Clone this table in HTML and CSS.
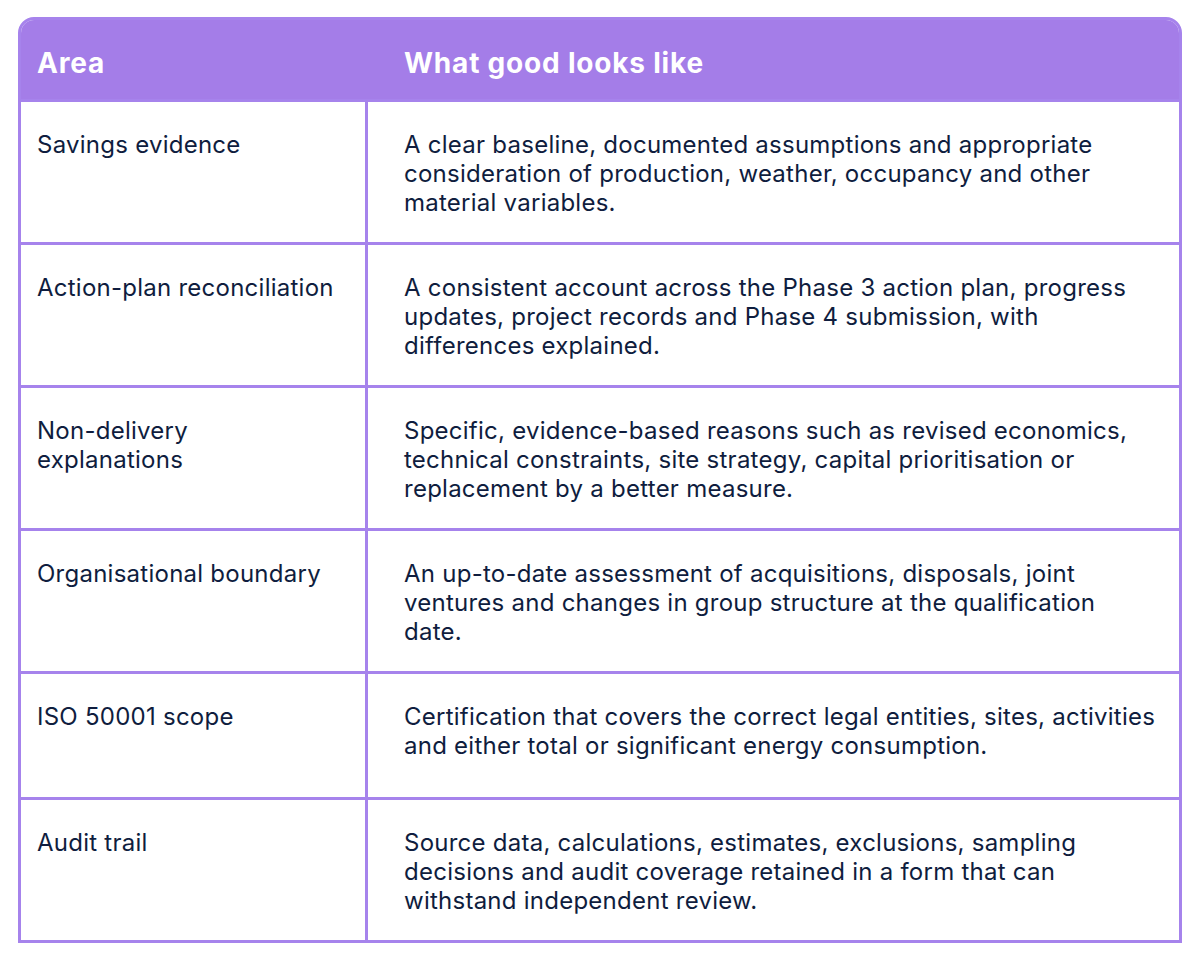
FILE: index.html
```html
<!DOCTYPE html>
<html lang="en">
<head>
<meta charset="utf-8">
<title>What good looks like</title>
<link rel="stylesheet" href="styles.css">
</head>
<body>
<div class="table">
  <div class="row head">
    <div class="cell area">Area</div>
    <div class="cell desc">What good looks like</div>
  </div>
  <div class="row">
    <div class="cell area">Savings evidence</div>
    <div class="cell desc">A clear baseline, documented assumptions and appropriate consideration of production, weather, occupancy and other material variables.</div>
  </div>
  <div class="row">
    <div class="cell area">Action-plan reconciliation</div>
    <div class="cell desc">A consistent account across the Phase 3 action plan, progress updates, project records and Phase 4 submission, with differences explained.</div>
  </div>
  <div class="row">
    <div class="cell area">Non-delivery explanations</div>
    <div class="cell desc">Specific, evidence-based reasons such as revised economics, technical constraints, site strategy, capital prioritisation or replacement by a better measure.</div>
  </div>
  <div class="row">
    <div class="cell area">Organisational boundary</div>
    <div class="cell desc">An up-to-date assessment of acquisitions, disposals, joint ventures and changes in group structure at the qualification date.</div>
  </div>
  <div class="row">
    <div class="cell area">ISO 50001 scope</div>
    <div class="cell desc">Certification that covers the correct legal entities, sites, activities and either total or significant energy consumption.</div>
  </div>
  <div class="row">
    <div class="cell area">Audit trail</div>
    <div class="cell desc">Source data, calculations, estimates, exclusions, sampling decisions and audit coverage retained in a form that can withstand independent review.</div>
  </div>
</div>
</body>
</html>
```
FILE: styles.css
```css
html, body {
  margin: 0;
  padding: 0;
  background: #ffffff;
}
body {
  padding: 17px 18px 0 18px;
  font-family: Inter, "Noto Sans", sans-serif;
  color: #0f1d3e;
}
.table {
  border: 3px solid #a683ec;
  border-radius: 16px 16px 0 0;
  overflow: hidden;
}
.row {
  display: grid;
  grid-template-columns: 347px 1fr;
  border-top: 3px solid #a683ec;
}
.row.head {
  border-top: none;
  background: #a47de8;
  height: 79px;
  align-items: center;
}
.cell {
  box-sizing: border-box;
  font-size: 24px;
  line-height: 29px;
  letter-spacing: 0.25px;
  padding: 28px 20px 25px 16px;
  min-height: 123px;
}
.row .cell.area {
  border-right: 3px solid #a683ec;
  padding-right: 27px;
}
.row.head .cell {
  color: #ffffff;
  font-weight: 700;
  font-size: 28px;
  letter-spacing: 0.8px;
  padding-top: 8px;
  padding-bottom: 0;
  min-height: 0;
  border-right: none;
}
.cell.desc {
  padding-left: 36px;
}
```
